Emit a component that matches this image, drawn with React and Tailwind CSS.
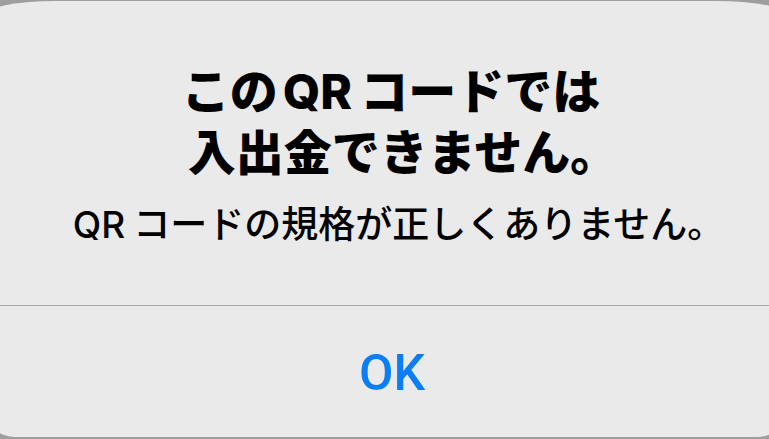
export default function App() {
  return (
    <div className="h-[439px] w-[769px] overflow-hidden bg-[#9d9e9d] font-['Inter','Noto_Sans_CJK_JP',sans-serif]">
      {/* Alert card */}
      <div className="ml-[-14px] mt-[1px] flex h-[436px] w-[800px] flex-col rounded-t-[70px_14px] rounded-b-[28px] bg-[#eaeaea]">
        {/* Title + message */}
        <div className="pl-[14px] pt-[60px] text-center text-black">
          <h1 className="text-[48px] font-extrabold leading-[61px]">
            <span className="block pr-[4px]">
              この<span className="ml-[5px] mr-[8px]">QR</span>コードでは
            </span>
            <span className="block pl-[20px]">入出金できません。</span>
          </h1>
          <p className="mt-[20px] pl-[11px] text-[37px] font-medium leading-[44px]">
            <span className="mr-[8px]">QR</span>コードの規格が正しくありません。
          </p>
        </div>

        <div className="mt-[58px] h-px bg-[#a8a8a8]" />

        {/* Button */}
        <button className="flex flex-1 items-center justify-center pl-[12px] pt-[4px] font-['Roboto',sans-serif] text-[50px] font-medium text-[#0b7ef6]">
          OK
        </button>
      </div>
    </div>
  );
}
